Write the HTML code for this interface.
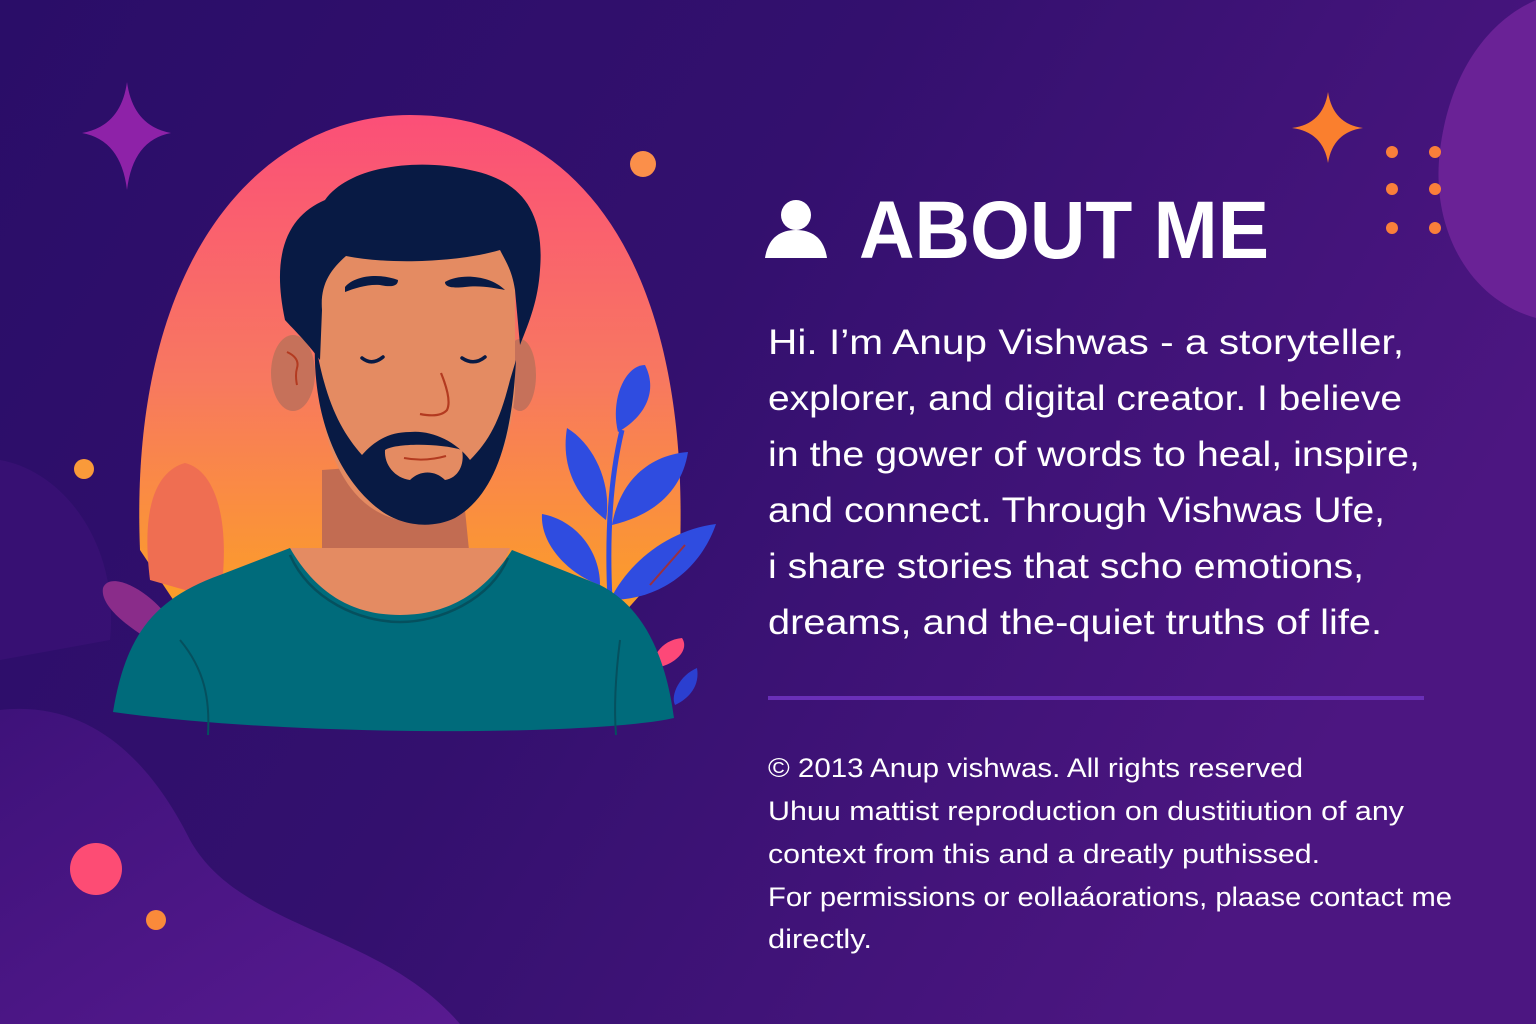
<!DOCTYPE html>
<html><head><meta charset="utf-8"><style>
html,body{margin:0;padding:0;width:1536px;height:1024px;overflow:hidden;background:#2e0f6a}
svg{display:block}
text{font-family:"Liberation Sans",sans-serif;fill:#fff}
</style></head><body>
<svg width="1536" height="1024" viewBox="0 0 1536 1024" xmlns="http://www.w3.org/2000/svg">
<defs>
<linearGradient id="bg" x1="0" y1="0" x2="1" y2="0.4">
<stop offset="0" stop-color="#2a0d68"/><stop offset="0.5" stop-color="#33106e"/><stop offset="1" stop-color="#4c1681"/>
</linearGradient>
<linearGradient id="arch" x1="0" y1="0" x2="0" y2="1">
<stop offset="0" stop-color="#fb4f78"/><stop offset="0.5" stop-color="#f87860"/><stop offset="1" stop-color="#fca41f"/>
</linearGradient>
<linearGradient id="blob" x1="0" y1="0" x2="1" y2="1">
<stop offset="0" stop-color="#3e127a"/><stop offset="1" stop-color="#581a90"/>
</linearGradient>
</defs>
<rect width="1536" height="1024" fill="url(#bg)"/>
<path d="M0 710 C90 700 150 760 190 840 C240 930 380 930 460 1024 L0 1024 Z" fill="url(#blob)"/>
<path d="M0 460 C60 470 120 540 110 640 L0 660 Z" fill="#3a1176" opacity="0.8"/>
<path d="M1536 0 L1536 318 C1470 300 1430 230 1440 150 C1450 70 1490 20 1536 0 Z" fill="#6a2296"/>
<path d="M127 82 Q133 126 171 133 Q133 140 127 190 Q121 140 82 133 Q121 126 127 82 Z" fill="#8e22a8"/>
<path d="M1328 92 Q1333 124 1363 128 Q1333 132 1328 163 Q1323 132 1292 128 Q1323 124 1328 92 Z" fill="#fa7f2e"/>
<g fill="#fa7f3a">
<circle cx="1392" cy="152" r="6"/><circle cx="1435" cy="152" r="6"/>
<circle cx="1392" cy="189" r="6"/><circle cx="1435" cy="189" r="6"/>
<circle cx="1392" cy="228" r="6"/><circle cx="1435" cy="228" r="6"/>
</g>
<circle cx="643" cy="164" r="13" fill="#fb8f4a"/>
<circle cx="84" cy="469" r="10" fill="#fa9a3a"/>
<circle cx="96" cy="869" r="26" fill="#fd4c74"/>
<circle cx="156" cy="920" r="10" fill="#fa8a3a"/>
<path d="M140 550 C128 260 260 115 410 115 C575 115 690 260 680 550 L600 640 L200 640 Z" fill="url(#arch)"/>
<path d="M150 580 C140 500 160 470 185 463 C215 470 232 520 220 600 Z" fill="#ef6e52"/>
<path d="M103 588 C110 570 150 590 170 620 L150 640 C125 625 100 605 103 588 Z" fill="#8a2c8a"/>
<g fill="#2f4ce0">
<path d="M645 365 C625 365 610 400 618 432 C640 420 660 395 645 365 Z"/>
<path d="M567 428 C560 470 580 500 606 520 C612 485 595 445 567 428 Z"/>
<path d="M688 452 C650 455 620 480 612 525 C655 515 682 490 688 452 Z"/>
<path d="M542 514 C540 545 570 575 600 585 C600 550 575 520 542 514 Z"/>
<path d="M716 524 C670 530 630 560 610 600 C660 600 700 570 716 524 Z"/>
<path d="M622 430 Q605 500 610 600" stroke="#2f4ce0" stroke-width="5" fill="none"/>
<path d="M682 638 C660 640 650 660 655 668 C675 665 690 650 682 638 Z" fill="#fd4878"/>
<path d="M697 668 C680 675 670 695 675 705 C690 698 700 685 697 668 Z" fill="#2b3fd0"/>
<path d="M685 545 L650 585" stroke="#9a3040" stroke-width="2"/>
</g>
<path d="M322 470 L322 560 L470 560 L460 460 Z" fill="#c26c52"/>
<path d="M290 548 L510 548 C490 600 440 620 400 620 C360 620 310 600 290 548 Z" fill="#e48b62"/>
<path d="M113 712 C125 640 150 600 220 575 L290 548 C320 600 360 615 400 615 C440 615 480 600 512 550 L600 585 C640 605 665 650 674 718 C600 735 300 738 113 712 Z" fill="#006b7b"/>
<path d="M290 555 C310 600 360 622 400 622 C440 622 490 600 508 558" stroke="#05505e" stroke-width="2.5" fill="none"/>
<path d="M180 640 C205 670 210 700 208 735" stroke="#05505e" stroke-width="2" fill="none"/>
<path d="M620 640 C615 680 614 710 616 735" stroke="#05505e" stroke-width="2" fill="none"/>
<ellipse cx="293" cy="373" rx="22" ry="38" fill="#c6715a"/>
<ellipse cx="520" cy="375" rx="16" ry="36" fill="#c6715a"/>
<path d="M287 352 Q300 358 297 368 Q295 375 297 385" stroke="#b33a20" stroke-width="2" fill="none"/>
<path d="M320 260 C330 230 500 225 515 265 L515 390 C510 470 470 520 415 522 C360 520 325 470 320 390 Z" fill="#e48b62"/>
<path d="M285 320 C270 250 290 215 325 200 C350 165 420 158 470 170 C520 180 545 210 540 270 C538 300 530 320 520 345 L515 290 C512 270 505 260 500 250 C460 262 390 265 346 256 C330 270 320 285 322 310 L320 360 C305 340 294 330 285 320 Z" fill="#081a44"/>
<path d="M315 340 C312 420 340 480 380 510 C400 525 430 530 455 518 C495 495 512 440 516 360 L510 380 C500 420 490 440 470 460 C455 440 430 430 410 432 C390 432 375 440 362 455 C340 430 325 400 315 340 Z" fill="#081a44"/>
<path d="M385 450 C395 443 440 443 462 450 C465 465 458 478 445 480 C435 470 420 470 410 480 C395 478 384 465 385 450 Z" fill="#e48b62"/>
<path d="M404 458 Q425 462 446 456" stroke="#b33a20" stroke-width="2" fill="none"/>
<path d="M345 287 C355 275 380 273 398 280 C398 287 390 287 380 285 C368 284 355 288 345 292 Z" fill="#081a44"/>
<path d="M445 282 C460 273 490 275 505 290 C495 288 480 285 465 287 C455 288 445 288 445 282 Z" fill="#081a44"/>
<path d="M362 358 Q372 366 383 357" stroke="#081a44" stroke-width="3.5" fill="none" stroke-linecap="round"/>
<path d="M462 358 Q474 366 485 357" stroke="#081a44" stroke-width="3.5" fill="none" stroke-linecap="round"/>
<path d="M441 373 Q452 400 447 410 Q440 418 420 414" stroke="#b33a20" stroke-width="2.2" fill="none"/>
<g fill="#fff">
<circle cx="796" cy="215" r="15"/>
<path d="M765 258 C768 238 780 230 796 230 C812 230 824 238 827 258 Z"/>
</g>
<text x="859" y="258" font-size="82" font-weight="bold" textLength="410" lengthAdjust="spacingAndGlyphs">ABOUT ME</text>
<g font-size="35">
<text x="768" y="354" textLength="636" lengthAdjust="spacingAndGlyphs">Hi. I’m Anup Vishwas - a storyteller,</text>
<text x="768" y="410" textLength="634" lengthAdjust="spacingAndGlyphs">explorer, and digital creator. I believe</text>
<text x="768" y="466" textLength="652" lengthAdjust="spacingAndGlyphs">in the gower of words to heal, inspire,</text>
<text x="768" y="522" textLength="617" lengthAdjust="spacingAndGlyphs">and connect. Through Vishwas Ufe,</text>
<text x="768" y="578" textLength="596" lengthAdjust="spacingAndGlyphs">i share stories that scho emotions,</text>
<text x="768" y="634" textLength="614" lengthAdjust="spacingAndGlyphs">dreams, and the-quiet truths of life.</text>
</g>
<rect x="768" y="696" width="656" height="4" fill="#6a2fb8"/>
<g font-size="27">
<text x="768" y="777" textLength="535" lengthAdjust="spacingAndGlyphs">© 2013 Anup vishwas. All rights reserved</text>
<text x="768" y="820" textLength="636" lengthAdjust="spacingAndGlyphs">Uhuu mattist reproduction on dustitiution of any</text>
<text x="768" y="863" textLength="552" lengthAdjust="spacingAndGlyphs">context from this and a dreatly puthissed.</text>
<text x="768" y="906" textLength="684" lengthAdjust="spacingAndGlyphs">For permissions or eollaáorations, plaase contact me</text>
<text x="768" y="948" textLength="104" lengthAdjust="spacingAndGlyphs">directly.</text>
</g>
</svg>
</body></html>
